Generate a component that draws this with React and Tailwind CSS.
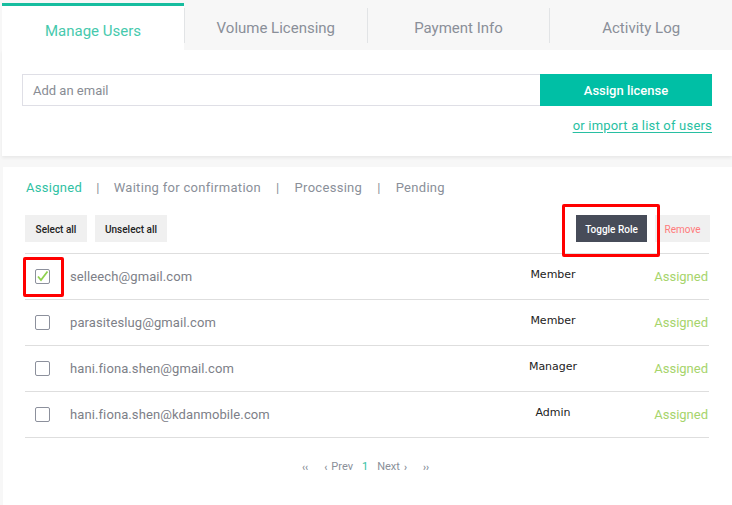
import React from "react";

const users = [
  { email: "selleech@gmail.com", role: "Member", checked: true },
  { email: "parasiteslug@gmail.com", role: "Member", checked: false },
  { email: "hani.fiona.shen@gmail.com", role: "Manager", checked: false },
  { email: "hani.fiona.shen@kdanmobile.com", role: "Admin", checked: false },
];

function CheckBox({ checked }) {
  return (
    <div className="w-[15px] h-[15px] border border-[#8c909c] rounded-[2px] bg-white flex items-center justify-center">
      {checked && (
        <svg width="13" height="13" viewBox="0 0 13 13">
          <path d="M2 6.5 L5 10 L11.5 1.5" fill="none" stroke="#8fd14f" strokeWidth="1.8" />
        </svg>
      )}
    </div>
  );
}

export default function App() {
  return (
    <div
      className="w-[732px] h-[505px] bg-[#f7f7f7] overflow-hidden relative"
      style={{ fontFamily: "Roboto, 'Noto Sans', sans-serif" }}
    >
      {/* top tabs */}
      <div className="h-[50px] flex">
        <div className="w-[182px] ml-[2px] mt-[3px] bg-white border-t-[3px] border-[#16bd9f] flex items-center justify-center pt-[6px] text-[15px] text-[#46c9ad]">
          Manage Users
        </div>
        {["Volume Licensing", "Payment Info", "Activity Log"].map((t) => (
          <div key={t} className="flex-1 flex items-center">
            <div className="w-px h-[35px] bg-[#e2e4e6]" />
            <div className="flex-1 text-center text-[15px] text-[#8a8f99] pt-[6px]">{t}</div>
          </div>
        ))}
      </div>

      {/* assign panel */}
      <div className="ml-[2px] h-[106px] bg-white shadow-[0_2px_3px_rgba(0,0,0,0.06)] px-[20px] pt-[24px]">
        <div className="flex h-[32px]">
          <div className="flex-1 border border-[#dfdfe6] border-r-0 flex items-center px-[10px] pt-[2px] text-[13px] text-[#888c94]">
            Add an email
          </div>
          <button className="w-[172px] bg-[#00bfa5] text-white text-[13px] font-medium pt-[2px]">
            Assign license
          </button>
        </div>
        <div className="flex justify-end mt-[10px]">
          <span className="text-[13px] tracking-[0.2px] text-[#28bfa2] underline underline-offset-2">or import a list of users</span>
        </div>
      </div>

      {/* users panel */}
      <div className="ml-[3px] mt-[11px] h-[338px] bg-white px-[22px] pt-[13px]">
        <div className="flex items-center text-[13px] tracking-[0.3px] text-[#8a8f99] h-[16px] ml-px">
          <span className="text-[#2fc1a3]">Assigned</span>
          <span className="mx-[14px]">|</span>
          <span>Waiting for confirmation</span>
          <span className="mx-[15px]">|</span>
          <span>Processing</span>
          <span className="mx-[15px]">|</span>
          <span>Pending</span>
        </div>

        <div className="flex items-center mt-[19px] h-[27px]">
          <button className="h-[27px] w-[62px] bg-[#f0f0f0] text-[10px] font-medium text-[#222] pt-[2px]">Select all</button>
          <button className="h-[27px] w-[72px] ml-[8px] bg-[#f0f0f0] text-[10px] font-medium text-[#222] pt-[2px]">Unselect all</button>
          <div className="flex-1" />
          <button className="h-[27px] w-[71px] bg-[#474c59] text-[10px] font-medium text-white pt-[2px]">Toggle Role</button>
          <button className="h-[27px] w-[55px] ml-[8px] bg-[#f0f0f0] text-[10px] text-[#ff7b7b] pt-[2px]">Remove</button>
        </div>

        <div className="mt-[11px] border-t border-[#dedede] w-[684px]">
          {users.map((u) => (
            <div key={u.email} className="h-[46px] border-b border-[#dedede] flex items-center">
              <div className="w-[45px] pl-[10px]">
                <CheckBox checked={u.checked} />
              </div>
              <div className="flex-1 text-[13px] tracking-[0.1px] text-[#7d8088]">{u.email}</div>
              <div
                className="w-[80px] text-center text-[11px] text-[#222] -mt-[2px]"
                style={{ fontFamily: "'DejaVu Sans', Verdana, sans-serif" }}
              >
                {u.role}
              </div>
              <div className="w-[116px] text-right text-[13px] text-[#a6d46b] pr-px">Assigned</div>
            </div>
          ))}
        </div>

        <div className="flex items-center justify-center mt-[21px] text-[11px] text-[#8a8f99] gap-[4px] pr-[4px]">
          <span className="text-[10px] font-bold">‹‹</span>
          <span className="ml-[12px] text-[10px] font-bold">‹</span>
          <span>Prev</span>
          <span className="mx-[5px] text-[#2fc1a3]">1</span>
          <span>Next</span>
          <span className="text-[10px] font-bold">›</span>
          <span className="ml-[12px] text-[10px] font-bold">››</span>
        </div>
      </div>

      {/* annotation boxes */}
      <div className="absolute left-[562px] top-[204px] w-[98px] h-[53px] border-[3px] border-[#ff0000] rounded-[2px]" />
      <div className="absolute left-[23px] top-[257px] w-[41px] h-[40px] border-[3px] border-[#ff0000] rounded-[2px]" />
    </div>
  );
}
